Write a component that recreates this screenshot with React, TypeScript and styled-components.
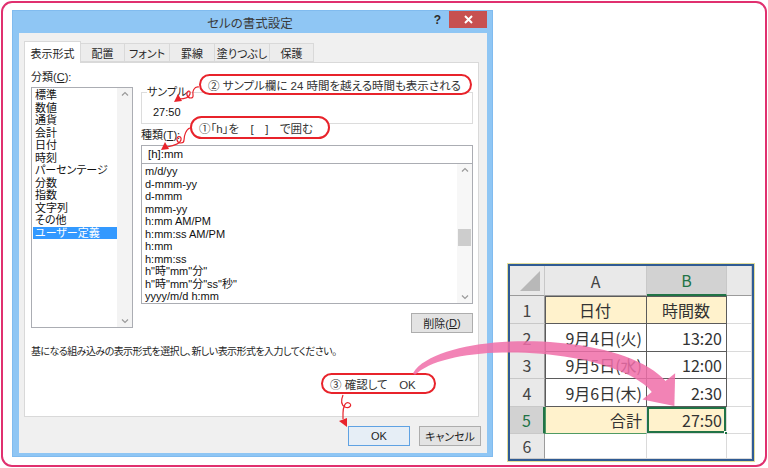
import React from "react";
import styled, { createGlobalStyle } from "styled-components";

const GlobalStyle = createGlobalStyle`
  html, body {
    margin: 0;
    padding: 0;
    background: #fff;
  }
  body {
    width: 768px;
    height: 468px;
    overflow: hidden;
    font-family: "Liberation Sans", "Noto Sans CJK JP", sans-serif;
    font-feature-settings: "palt";
  }
  * {
    box-sizing: border-box;
  }
`;

const categories = [
  "標準",
  "数値",
  "通貨",
  "会計",
  "日付",
  "時刻",
  "パーセンテージ",
  "分数",
  "指数",
  "文字列",
  "その他",
  "ユーザー定義",
];

const formats = [
  "m/d/yy",
  "d-mmm-yy",
  "d-mmm",
  "mmm-yy",
  "h:mm AM/PM",
  "h:mm:ss AM/PM",
  "h:mm",
  "h:mm:ss",
  'h"時"mm"分"',
  'h"時"mm"分"ss"秒"',
  "yyyy/m/d h:mm",
];

const tabs = [
  { label: "表示形式", w: 57 },
  { label: "配置", w: 45 },
  { label: "フォント", w: 46 },
  { label: "罫線", w: 46 },
  { label: "塗りつぶし", w: 56 },
  { label: "保護", w: 45 },
];

type Row = {
  n: number;
  a: string;
  b: string;
};

const rows: Row[] = [
  { n: 1, a: "日付", b: "時間数" },
  { n: 2, a: "9月4日(火)", b: "13:20" },
  { n: 3, a: "9月5日(水)", b: "12:00" },
  { n: 4, a: "9月6日(木)", b: "2:30" },
  { n: 5, a: "合計", b: "27:50" },
  { n: 6, a: "", b: "" },
];

// ---------- frame ----------

const Frame = styled.div`
  position: relative;
  margin: 1px;
  width: 766px;
  height: 466px;
  border: 2px solid #e0306f;
  border-radius: 11px;
  display: flex;
  align-items: flex-start;
  padding: 7px 0 0 9px;
`;

// ---------- dialog ----------

const Dialog = styled.div`
  width: 481px;
  height: 447px;
  background: #8fc6f4;
  border: 1px solid #80bbef;
  display: flex;
  flex-direction: column;
`;

const TitleBar = styled.div`
  height: 22px;
  display: grid;
  grid-template-columns: 1fr auto 1fr;
  align-items: center;
  padding-right: 5px;
`;

const Title = styled.div`
  grid-column: 2;
  font-family: "Noto Sans CJK JP", sans-serif;
  font-size: 12.5px;
  color: #3a3a3a;
`;

const TitleControls = styled.div`
  grid-column: 3;
  align-self: start;
  display: flex;
  justify-content: flex-end;
  align-items: center;
`;

const Help = styled.span`
  font-family: "Liberation Sans", sans-serif;
  font-weight: bold;
  font-size: 12px;
  color: #2b2b2b;
  margin-right: 8px;
  margin-top: 1px;
`;

const CloseButton = styled.div`
  width: 38px;
  height: 17px;
  background: #c75050;
  display: flex;
  align-items: center;
  justify-content: center;
`;

const Body = styled.div`
  flex: 1;
  margin: 0 5px 3px 6px;
  background: #f0f0f0;
  padding: 8px 8px 7px 5px;
  display: flex;
  flex-direction: column;
`;

const TabRow = styled.div`
  height: 21px;
  display: flex;
  align-items: flex-end;
`;

const Tab = styled.div<{ $active?: boolean; $w: number }>`
  position: relative;
  z-index: ${(p) => (p.$active ? 2 : 1)};
  width: ${(p) => p.$w}px;
  height: ${(p) => (p.$active ? 22 : 19)}px;
  margin-bottom: ${(p) => (p.$active ? -1 : 0)}px;
  margin-left: -1px;
  &:first-child {
    margin-left: 0;
  }
  background: ${(p) => (p.$active ? "#ffffff" : "#ececec")};
  border: 1px solid #d9d9d9;
  border-bottom: ${(p) => (p.$active ? "none" : "1px solid #d9d9d9")};
  display: flex;
  align-items: center;
  justify-content: center;
  font-size: 11px;
  color: #262626;
`;

const Panel = styled.div`
  height: 355px;
  background: #ffffff;
  border: 1px solid #d9d9d9;
  padding: 7px 5px 0 6px;
  display: flex;
  flex-direction: column;
`;

const PanelGrid = styled.div`
  display: grid;
  grid-template-columns: 102px 332px;
  column-gap: 8px;
  align-items: start;
`;

const Column = styled.div`
  display: flex;
  flex-direction: column;
`;

const Label = styled.div<{ $mt?: number }>`
  font-size: 11px;
  line-height: 14px;
  height: 14px;
  color: #1e1e1e;
  margin-top: ${(p) => p.$mt ?? 0}px;
  white-space: nowrap;
`;

const ListBox = styled.div<{ $h: number; $mt?: number }>`
  height: ${(p) => p.$h}px;
  margin-top: ${(p) => p.$mt ?? 0}px;
  border: 1px solid #abadb3;
  background: #fff;
  display: flex;
`;

const ListItems = styled.div<{ $pl: number }>`
  flex: 1;
  padding: 1px 0 0 ${(p) => p.$pl}px;
  overflow: hidden;
`;

const ListItem = styled.div<{ $selected?: boolean; $pad: number }>`
  height: 12.5px;
  line-height: 12.5px;
  font-size: 11px;
  white-space: nowrap;
  padding-left: ${(p) => p.$pad}px;
  color: ${(p) => (p.$selected ? "#ffffff" : "#111")};
  background: ${(p) => (p.$selected ? "#3399ff" : "transparent")};
`;

const ScrollBar = styled.div<{ $bg: string }>`
  width: 15px;
  background: ${(p) => p.$bg};
  display: flex;
  flex-direction: column;
  align-items: center;
  justify-content: space-between;
  padding: 3px 0 3px;
`;

const Thumb = styled.div<{ $top: number }>`
  width: 13px;
  height: 17px;
  background: #cdcdcd;
  margin-top: ${(p) => p.$top}px;
`;

const ScrollTrack = styled.div`
  flex: 1;
  display: flex;
  flex-direction: column;
  align-items: center;
`;

const GroupBox = styled.fieldset`
  margin: 16px 0 0;
  padding: 0 0 0 5px;
  height: 38px;
  border: 1px solid #dcdcdc;
  border-radius: 0;
  min-width: 0;
`;

const GroupLegend = styled.legend`
  padding: 0;
  font-size: 11px;
  line-height: 12px;
  color: #1e1e1e;
`;

const SampleValue = styled.div`
  font-size: 11px;
  line-height: 14px;
  margin: 7px 0 0 6px;
  color: #111;
`;

const TextInput = styled.div`
  height: 19px;
  margin-top: 3px;
  border: 1px solid #abadb3;
  background: #fff;
  padding-left: 6px;
  font-size: 11.5px;
  line-height: 17px;
  color: #111;
`;

const Button = styled.div<{ $focus?: boolean }>`
  width: 62px;
  height: 20px;
  border: 1px solid ${(p) => (p.$focus ? "#5fa2e3" : "#adadad")};
  background: ${(p) => (p.$focus ? "#e6eef6" : "#e3e3e3")};
  display: flex;
  align-items: center;
  justify-content: center;
  font-size: 11px;
  color: #1e1e1e;
`;

const DeleteRow = styled.div`
  display: flex;
  justify-content: flex-end;
  margin-top: 9px;
`;

const Hint = styled.div`
  margin-top: 12px;
  font-size: 10px;
  line-height: 13px;
  letter-spacing: -0.55px;
  color: #1e1e1e;
  white-space: nowrap;
`;

const ButtonRow = styled.div`
  margin-top: 9px;
  display: flex;
  justify-content: flex-end;
  gap: 9px;
  margin-right: -2px;
`;

// ---------- spreadsheet ----------

const Sheet = styled.div`
  align-self: flex-end;
  margin: 0 0 4px 15px;
  border: 2px solid #2f5b94;
  box-shadow: 0 0 0 1px #e2dd9a;
  display: grid;
  grid-template-columns: 35px 102px 80px 25px;
  grid-template-rows: 30px 28px 28px 27px 28px 27px 25px;
  background: #fff;
  font-family: "Noto Sans CJK JP", sans-serif;
  font-feature-settings: normal;
`;

const HeadCell = styled.div<{ $active?: boolean }>`
  position: relative;
  background: ${(p) => (p.$active ? "#d2d2d2" : "#e9e9e9")};
  border-right: 1px solid #c8c8c8;
  border-bottom: ${(p) => (p.$active ? "2px solid #217346" : "1px solid #9b9b9b")};
  display: flex;
  align-items: center;
  justify-content: center;
  font-size: 16px;
  color: ${(p) => (p.$active ? "#217346" : "#444")};
`;

const Corner = styled(HeadCell)`
  &::after {
    content: "";
    position: absolute;
    right: 4px;
    bottom: 4px;
    width: 20px;
    height: 20px;
    background: #b8b8b8;
    clip-path: polygon(100% 0, 100% 100%, 0 100%);
  }
`;

const RowHead = styled.div<{ $active?: boolean }>`
  background: ${(p) => (p.$active ? "#d2d2d2" : "#e9e9e9")};
  border-right: ${(p) => (p.$active ? "2px solid #217346" : "1px solid #9b9b9b")};
  border-bottom: 1px solid #c8c8c8;
  display: flex;
  align-items: center;
  justify-content: center;
  font-size: 16px;
  color: ${(p) => (p.$active ? "#217346" : "#444")};
`;

type CellProps = {
  $fill?: string;
  $align?: "left" | "center" | "right";
  $dark?: boolean;
  $top?: boolean;
  $left?: boolean;
  $green?: boolean;
  $selected?: boolean;
};

const Cell = styled.div<CellProps>`
  position: relative;
  background: ${(p) => p.$fill ?? "#fff"};
  border-right: 1px solid ${(p) => (p.$dark ? "#5b5b5b" : "#dadada")};
  border-bottom: 1px solid
    ${(p) => (p.$dark ? "#5b5b5b" : p.$green ? "#4f9a63" : "#dadada")};
  box-shadow: ${(p) =>
    [
      p.$top && "inset 0 1px 0 #5b5b5b",
      p.$left && "inset 1px 0 0 #5b5b5b",
      p.$green && "inset 1px 0 0 #4f9a63",
      p.$selected && "inset 0 0 0 2px #217346",
    ]
      .filter(Boolean)
      .join(", ") || "none"};
  display: flex;
  align-items: center;
  justify-content: ${(p) =>
    p.$align === "center" ? "center" : p.$align === "left" ? "flex-start" : "flex-end"};
  padding: 0 4px 0 3px;
  font-size: 16px;
  color: #333;
  white-space: nowrap;
`;

const FillHandle = styled.span`
  position: absolute;
  right: -3px;
  bottom: -3px;
  width: 5px;
  height: 5px;
  background: #217346;
  border: 1px solid #fff;
`;

// ---------- overlays ----------

const Callout = styled.div<{ $x: number; $y: number; $w: number; $h: number }>`
  position: absolute;
  left: ${(p) => p.$x - 3}px;
  top: ${(p) => p.$y - 3}px;
  width: ${(p) => p.$w}px;
  height: ${(p) => p.$h}px;
  border: 2px solid #e8232b;
  border-radius: 12px;
  background: #fff;
  display: flex;
  align-items: center;
  padding-left: 7px;
  font-size: 11.5px;
  color: #333;
  white-space: pre;
  z-index: 5;
`;

const Overlay = styled.svg`
  position: absolute;
  left: -3px;
  top: -3px;
  width: 768px;
  height: 468px;
  pointer-events: none;
  z-index: 6;
`;

const Chevron = ({ up }: { up?: boolean }) => (
  <svg width="8" height="5" viewBox="0 0 8 5">
    <polyline
      points={up ? "1,4.5 4,1.5 7,4.5" : "1,0.5 4,3.5 7,0.5"}
      fill="none"
      stroke="#9a9a9a"
      strokeWidth="1.2"
    />
  </svg>
);

type Pt = [number, number];

const bez = (t: number, a: number, b: number, c: number, d: number) =>
  (1 - t) ** 3 * a + 3 * (1 - t) ** 2 * t * b + 3 * (1 - t) * t * t * c + t ** 3 * d;
const dbez = (t: number, a: number, b: number, c: number, d: number) =>
  3 * (1 - t) ** 2 * (b - a) + 6 * (1 - t) * t * (c - b) + 3 * t * t * (d - c);

function pinkArrow(): { shaft: string; head: string } {
  const P: Pt[] = [
    [414, 374],
    [445, 334],
    [620, 338],
    [660, 388],
  ];
  const left: Pt[] = [];
  const right: Pt[] = [];
  for (let i = 0; i <= 40; i++) {
    const t = i / 40;
    const x = bez(t, P[0][0], P[1][0], P[2][0], P[3][0]);
    const y = bez(t, P[0][1], P[1][1], P[2][1], P[3][1]);
    const dx = dbez(t, P[0][0], P[1][0], P[2][0], P[3][0]);
    const dy = dbez(t, P[0][1], P[1][1], P[2][1], P[3][1]);
    const len = Math.hypot(dx, dy) || 1;
    const nx = -dy / len;
    const ny = dx / len;
    const w = 1.3 + 7.5 * Math.pow(t, 0.7);
    left.push([x + nx * w, y + ny * w]);
    right.push([x - nx * w, y - ny * w]);
  }
  const pts = [...left, ...right.reverse()];
  const shaft =
    "M" + pts.map(([x, y]) => `${x.toFixed(1)},${y.toFixed(1)}`).join(" L") + " Z";
  const dx = P[3][0] - P[2][0];
  const dy = P[3][1] - P[2][1];
  const len = Math.hypot(dx, dy);
  const ux = dx / len;
  const uy = dy / len;
  const bx = P[3][0] - ux * 2;
  const by = P[3][1] - uy * 2;
  const hw = 21;
  const head = `M${bx - uy * hw},${by + ux * hw} L${bx + uy * hw},${by - ux * hw} L${
    bx + ux * 25
  },${by + uy * 25} Z`;
  return { shaft, head };
}

const arrow = pinkArrow();

const App: React.FC = () => {
  return (
    <>
      <GlobalStyle />
      <Frame>
        <Dialog>
          <TitleBar>
            <Title>セルの書式設定</Title>
            <TitleControls>
              <Help>?</Help>
              <CloseButton>
                <svg width="9" height="9" viewBox="0 0 9 9">
                  <path d="M1 1 L8 8 M8 1 L1 8" stroke="#fff" strokeWidth="2" />
                </svg>
              </CloseButton>
            </TitleControls>
          </TitleBar>
          <Body>
            <TabRow>
              {tabs.map((t, i) => (
                <Tab key={t.label} $w={t.w} $active={i === 0}>
                  {t.label}
                </Tab>
              ))}
            </TabRow>
            <Panel>
              <PanelGrid>
                <Column>
                  <Label>
                    分類(<u>C</u>):
                  </Label>
                  <ListBox $h={241} $mt={3}>
                    <ListItems $pl={1}>
                      {categories.map((c, i) => (
                        <ListItem key={c} $pad={2} $selected={i === categories.length - 1}>
                          {c}
                        </ListItem>
                      ))}
                    </ListItems>
                    <ScrollBar $bg="#f3f3f3">
                      <Chevron up />
                      <Chevron />
                    </ScrollBar>
                  </ListBox>
                </Column>
                <Column>
                  <GroupBox>
                    <GroupLegend>サンプル</GroupLegend>
                    <SampleValue>27:50</SampleValue>
                  </GroupBox>
                  <Label $mt={4}>
                    種類(<u>T</u>):
                  </Label>
                  <TextInput>[h]:mm</TextInput>
                  <ListBox $h={141} $mt={-1}>
                    <ListItems $pl={3}>
                      {formats.map((f) => (
                        <ListItem key={f} $pad={0}>
                          {f}
                        </ListItem>
                      ))}
                    </ListItems>
                    <ScrollBar $bg="#f7f7f7">
                      <Chevron up />
                      <ScrollTrack>
                        <Thumb $top={57} />
                      </ScrollTrack>
                      <Chevron />
                    </ScrollBar>
                  </ListBox>
                  <DeleteRow>
                    <Button>
                      削除(<u>D</u>)
                    </Button>
                  </DeleteRow>
                </Column>
              </PanelGrid>
              <Hint>基になる組み込みの表示形式を選択し、新しい表示形式を入力してください。</Hint>
            </Panel>
            <ButtonRow>
              <Button $focus>OK</Button>
              <Button>キャンセル</Button>
            </ButtonRow>
          </Body>
        </Dialog>

        <Sheet>
          <Corner />
          <HeadCell>A</HeadCell>
          <HeadCell $active>B</HeadCell>
          <HeadCell />
          {rows.map((r) => {
            const boxed = r.n <= 4;
            const total = r.n === 5;
            const fill = r.n === 1 || total ? "#fff2cc" : undefined;
            return (
              <React.Fragment key={r.n}>
                <RowHead $active={total}>{r.n}</RowHead>
                <Cell
                  $fill={fill}
                  $align={r.n === 1 ? "center" : "right"}
                  $dark={boxed}
                  $top={r.n === 1}
                  $left={boxed}
                  $green={total}
                >
                  {r.a}
                </Cell>
                <Cell
                  $fill={fill}
                  $align={r.n === 1 ? "center" : "right"}
                  $dark={boxed}
                  $top={r.n === 1}
                  $selected={total}
                >
                  {r.b}
                  {total && <FillHandle />}
                </Cell>
                <Cell />
              </React.Fragment>
            );
          })}
        </Sheet>

        <Callout $x={199} $y={74} $w={273} $h={21}>
          ② サンプル欄に 24 時間を越える時間も表示される
        </Callout>
        <Callout $x={190} $y={116} $w={140} $h={23}>
          {"①「h」を　[　]　で囲む"}
        </Callout>
        <Callout $x={321} $y={373} $w={115} $h={21}>
          ③ 確認して　OK
        </Callout>

        <Overlay viewBox="0 0 768 468">
          <g fill="none" stroke="#e8232b" strokeWidth="1.2">
            <path d="M199 87 C194 86 192 92 193 95 C194 99 188 99 187 95 C186 91 191 89 190 94 C189 98 183 99 179 99" />
            <path d="M190 128 C186 129 184 136 184 140 C184 144 178 144 177 140 C176 136 182 135 181 140 C180 144 172 146 167 147" />
            <path d="M343 395 C341 400 341 405 345 407 C349 409 353 405 349 403 C345 401 343 408 343 413 C343 416 343 418 343 419" />
          </g>
          <g fill="#e8232b">
            <polygon points="174,102 178,94 182,101" />
            <polygon points="161,150 165,142 169,149" />
            <polygon points="347,427 339,421 347,418" />
          </g>
          <g fill="#f06ea9" opacity="0.85">
            <path d={arrow.shaft} />
            <path d={arrow.head} />
          </g>
        </Overlay>
      </Frame>
    </>
  );
};

export default App;
